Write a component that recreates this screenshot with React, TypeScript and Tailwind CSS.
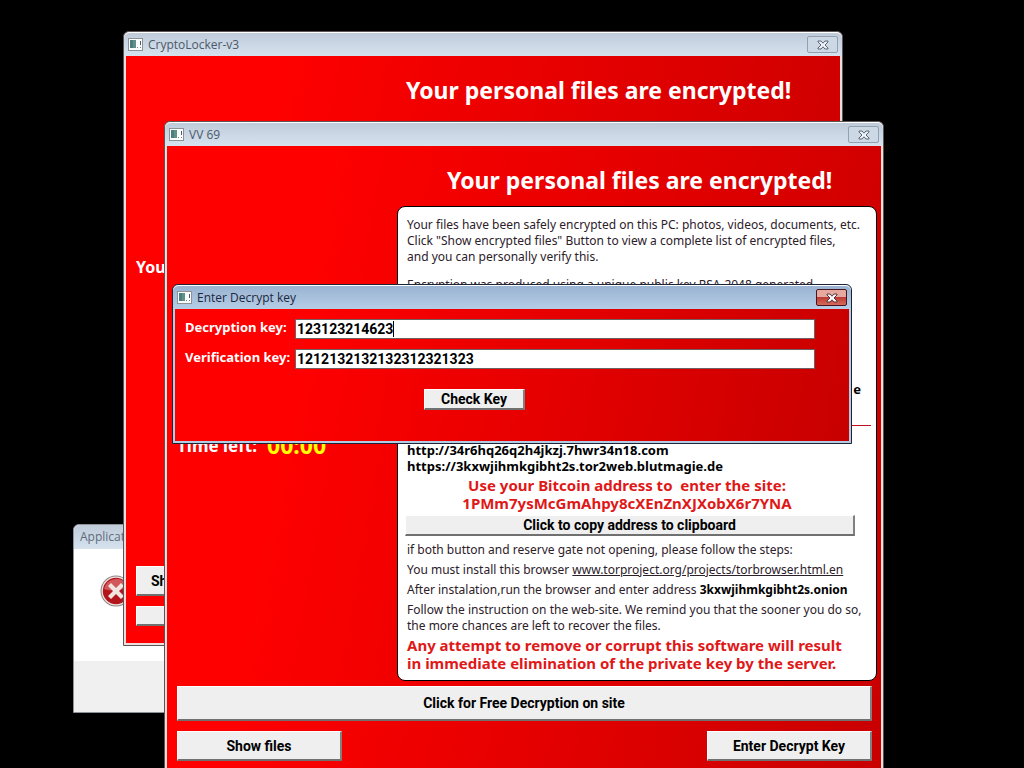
import type { ReactNode } from "react";
import clsx from "clsx";

/**
 * Small program glyph shown at the left of a title bar
 */
function AppIcon() {
  return (
    <svg viewBox="0 0 15 13" className="h-[13px] w-[15px] shrink-0" aria-hidden="true">
      <rect x="0.5" y="0.5" width="14" height="12" fill="#fbfdfc" stroke="#8b9296" />
      <rect x="2" y="2" width="6" height="8" fill="#5f9187" />
      <rect x="2" y="2" width="3" height="8" fill="#4d7c84" />
      <rect x="9" y="9" width="1" height="1" fill="#6f7f86" />
      <rect x="12" y="3" width="1" height="4" fill="#4a5a78" />
      <rect x="12" y="9" width="1" height="1" fill="#6f7f86" />
    </svg>
  );
}

type CloseProps = {
  active?: boolean;
};

function CloseButton({ active = false }: CloseProps) {
  return (
    <button
      type="button"
      aria-label="Close"
      className={clsx(
        "grid h-[17px] w-[31px] shrink-0 place-items-center rounded-xs border",
        active
          ? "border-[#4a1420] bg-linear-to-b from-[#e6a99f] from-45% via-[#bd3b33] via-50% to-[#d46a5c]"
          : "border-[#93a0b3] bg-[#ccd8e4]",
      )}
    >
      <svg viewBox="0 0 12 10" className="h-[10px] w-[12px]" aria-hidden="true">
        <path
          d="M1 1H4L6 3.2 8 1H11V2L8 5 11 8V9H8L6 6.8 4 9H1V8L4 5 1 2Z"
          fill={active ? "#ffffff" : "#eef3f7"}
          stroke={active ? "#5a3540" : "#5b6478"}
          strokeWidth="1"
        />
      </svg>
    </button>
  );
}

type WindowProps = {
  title: string;
  active?: boolean;
  className?: string;
  children: ReactNode;
};

/**
 * Framed window with a title bar and a red client area
 */
function RedWindow({ title, active = false, className, children }: WindowProps) {
  return (
    <section
      aria-label={title}
      className={clsx(
        "absolute flex flex-col rounded-t-md border",
        active ? "border-[#1c2436] bg-[#b4cbe4]" : "border-[#5c5558] bg-[#efdfdc]",
        className,
      )}
    >
      <header
        className={clsx(
          "flex h-6 shrink-0 items-center gap-[5px] rounded-t-md border-t border-white pr-1 pl-1 font-['Open_Sans',sans-serif] text-[12px]",
          active
            ? "bg-linear-to-b from-[#9ab3d1] to-[#b5cde6] text-[#1c2740]"
            : "bg-linear-to-b from-[#bfcbd9] to-[#d6e3ef] text-[#4c5868]",
        )}
      >
        <AppIcon />
        <h2 className="min-w-0 flex-1 truncate">{title}</h2>
        <CloseButton active={active} />
      </header>
      <div className="mx-0.5 mb-0.5 min-h-0 flex-1 bg-[linear-gradient(100deg,#ff0000_18%,#e80000_52%,#c80000_100%)]">
        {children}
      </div>
    </section>
  );
}

type ButtonProps = {
  className?: string;
  children?: ReactNode;
  label?: string;
};

function ClassicButton({ className, children, label }: ButtonProps) {
  return (
    <button
      type="button"
      aria-label={label}
      className={clsx(
        "border border-t-white border-r-2 border-b-2 border-l-white border-r-[#808080] border-b-[#707070] bg-[#efefef] font-[Roboto,sans-serif] text-[14px] leading-4 font-bold whitespace-nowrap text-black",
        className,
      )}
    >
      {children}
    </button>
  );
}

function ErrorDialog() {
  return (
    <section
      aria-label="Application error"
      className="absolute top-[524px] left-[73px] flex h-[189px] w-[240px] flex-col rounded-t-md border border-[#8c929a] bg-white"
    >
      <header className="h-6 shrink-0 rounded-t-md bg-linear-to-b from-[#bfcbd9] to-[#d6e3ef] px-1.5 font-['Open_Sans',sans-serif] text-[12px] leading-6 text-[#5f6b7a]">
        Application
      </header>
      <div className="flex-1 px-[26px] py-[26px]">
        <svg viewBox="0 0 32 32" className="size-8" aria-hidden="true">
          <circle cx="16" cy="16" r="15.5" fill="#8f8585" />
          <circle cx="16" cy="16" r="14.5" fill="#f0e2e0" />
          <circle cx="16" cy="16" r="13.2" fill="#b3151d" />
          <path d="M4 14A12.5 12.5 0 0 1 28 12Q16 18 4 14Z" fill="#d2575b" />
          <path
            d="M8 11 11 8 16 13 21 8 24 11 19 16 24 21 21 24 16 19 11 24 8 21 13 16Z"
            fill="#f1e6df"
          />
        </svg>
      </div>
      <footer className="h-[51px] bg-[#f0f0f0]" />
    </section>
  );
}

function NoticePanel() {
  return (
    <div className="h-[475px] rounded-lg border border-black bg-white pt-2.5 pr-[5px] pl-[9px] text-[12px] leading-4 whitespace-nowrap text-[#2c2029]">
      <p>Your files have been safely encrypted on this PC: photos, videos, documents, etc.</p>
      <p>Click "Show encrypted files" Button to view a complete list of encrypted files,</p>
      <p>and you can personally verify this.</p>
      <p className="mt-3">Encryption was produced using a unique public key RSA-2048 generated</p>
      <p className="mt-[88px] pr-2.5 text-right text-[13px] leading-4 font-bold text-black">e</p>
      <hr className="mt-7 h-px border-0 bg-[#c01020]" />
      <div className="mt-4 text-[13px] leading-4 font-bold text-black">
        <p>http://34r6hq26q2h4jkzj.7hwr34n18.com</p>
        <p>https://3kxwjihmkgibht2s.tor2web.blutmagie.de</p>
      </div>
      <div className="mt-0.5 pr-6 text-center text-[15px] leading-[18px] font-bold text-[#e01818]">
        <p className="whitespace-pre">Use your Bitcoin address to  enter the site:</p>
        <p>1PMm7ysMcGmAhpy8cXEnZnXJXobX6r7YNA</p>
      </div>
      <div className="mt-[3px] -ml-0.5 pr-4">
        <ClassicButton className="h-[21px] w-full">Click to copy address to clipboard</ClassicButton>
      </div>
      <p className="mt-1.5">if both button and reserve gate not opening, please follow the steps:</p>
      <p className="mt-1">
        You must install this browser{" "}
        <a href="#browser" className="underline">
          www.torproject.org/projects/torbrowser.html.en
        </a>
      </p>
      <p className="mt-1">
        After instalation,run the browser and enter address{" "}
        <b className="text-black">3kxwjihmkgibht2s.onion</b>
      </p>
      <p className="mt-1">Follow the instruction on the web-site. We remind you that the sooner you do so,</p>
      <p>the more chances are left to recover the files.</p>
      <div className="mt-0.5 text-[15px] leading-[18px] font-bold text-[#e01818]">
        <p>Any attempt to remove or corrupt this software will result</p>
        <p>in immediate elimination of the private key by the server.</p>
      </div>
    </div>
  );
}

type FieldProps = {
  id: string;
  label: string;
  value: string;
  caret?: boolean;
};

function KeyField({ id, label, value, caret = false }: FieldProps) {
  return (
    <div className="flex h-5">
      <label htmlFor={id} className="w-[110px] shrink-0 text-[13px] leading-4 font-bold whitespace-nowrap text-white">
        {label}
      </label>
      <div className="relative flex-1">
        <input
          id={id}
          type="text"
          defaultValue={value}
          className="block h-5 w-full border border-[#6f6064] bg-white px-px font-[Roboto,sans-serif] text-[14px] font-bold text-black outline-none"
        />
        {caret && <span className="absolute top-0.5 left-[98px] h-4 w-px bg-black" />}
      </div>
    </div>
  );
}

export default function App() {
  return (
    <main className="relative h-screen overflow-hidden bg-black font-['Noto_Sans',sans-serif]">
      <ErrorDialog />

      <RedWindow title="CryptoLocker-v3" className="top-[31px] left-[123px] h-[615px] w-[720px]">
        <div className="flex h-full flex-col px-2.5 pt-5 pb-[17px] text-white">
          <h1 className="pl-[270px] text-[23px] leading-7 font-bold whitespace-nowrap">
            Your personal files are encrypted!
          </h1>
          <p className="mt-[151px] text-[16px] leading-6 font-bold">Your</p>
          <div className="mt-auto flex flex-col items-start gap-2.5">
            <ClassicButton className="h-[30px] w-[165px] pl-3.5 text-left">Show files</ClassicButton>
            <ClassicButton className="h-5 w-[165px]" label="Enter key" />
          </div>
        </div>
      </RedWindow>

      <RedWindow title="VV 69" className="top-[121px] left-[164px] h-[704px] w-[720px]">
        <div className="pt-5 pr-[9px] pl-2.5">
          <h1 className="pl-[270px] text-[23px] leading-7 font-bold whitespace-nowrap text-white">
            Your personal files are encrypted!
          </h1>
          <div className="-mr-[5px] mt-3 flex">
            <div className="flex w-[220px] shrink-0 items-center gap-2.5 self-center pt-1 whitespace-nowrap">
              <span className="text-[17px] font-bold text-white">Time left:</span>
              <span className="text-[23px] font-bold text-[#ffff00]">00:00</span>
            </div>
            <div className="min-w-0 flex-1">
              <NoticePanel />
            </div>
          </div>
          <ClassicButton className="mt-[5px] h-[35px] w-full">Click for Free Decryption on site</ClassicButton>
          <div className="mt-2.5 flex justify-between">
            <ClassicButton className="h-[30px] w-[165px]">Show files</ClassicButton>
            <ClassicButton className="h-[30px] w-[165px]">Enter Decrypt Key</ClassicButton>
          </div>
        </div>
      </RedWindow>

      <RedWindow active title="Enter Decrypt key" className="top-[284px] left-[172px] h-[160px] w-[680px]">
        <form className="flex flex-col gap-2.5 pt-2.5 pr-[34px] pl-2.5" onSubmit={(e) => e.preventDefault()}>
          <KeyField id="decryption-key" label="Decryption key:" value="123123214623" caret />
          <KeyField id="verification-key" label="Verification key:" value="1212132132132312321323" />
          <ClassicButton className="mt-2.5 ml-[239px] h-[21px] w-[101px]">Check Key</ClassicButton>
        </form>
      </RedWindow>
    </main>
  );
}
